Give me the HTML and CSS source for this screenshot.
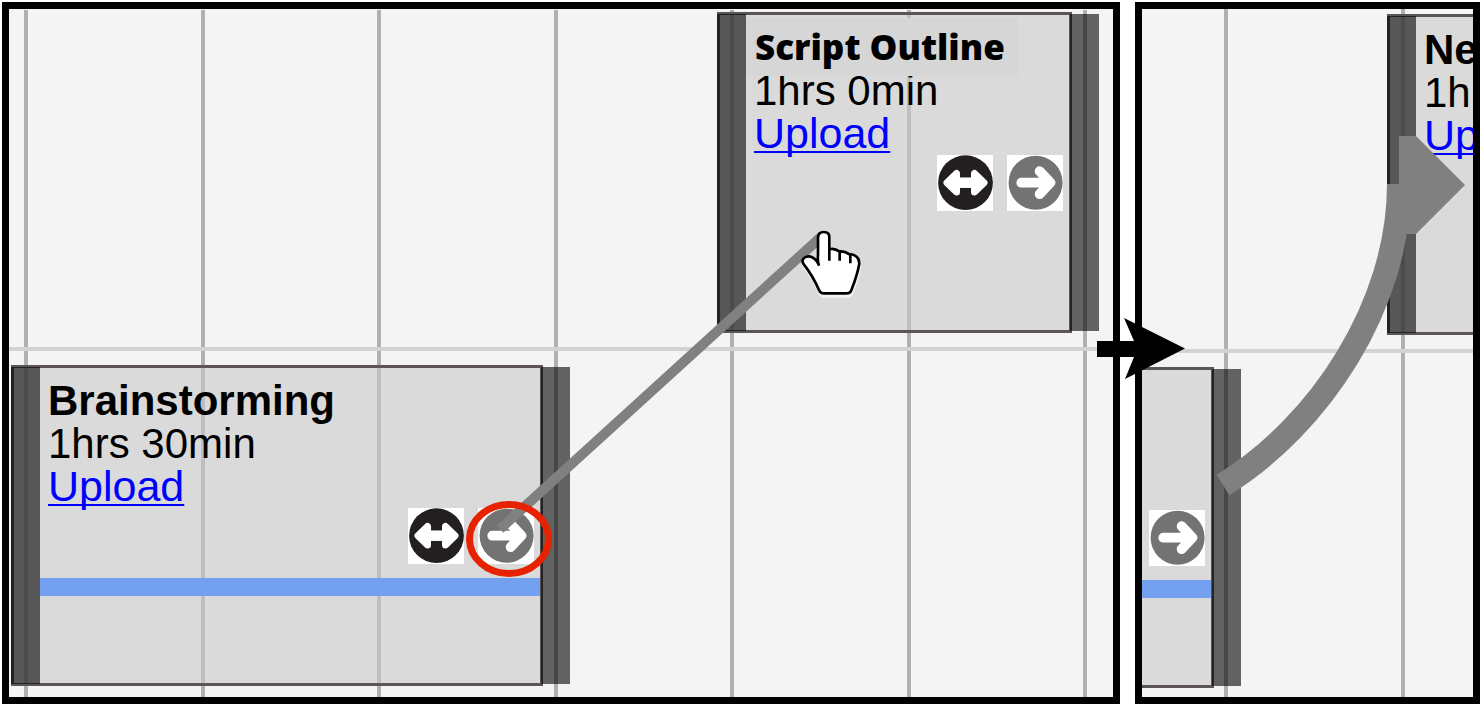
FILE: index.html
```
<!DOCTYPE html>
<html lang="en">
<head>
<meta charset="utf-8">
<title>Task handoff timeline</title>
<link rel="stylesheet" href="styles.css">
</head>
<body>
<svg class="symbols" aria-hidden="true">
  <symbol id="both" viewBox="0 0 56 56">
    <circle cx="28.5" cy="27.7" r="27.4" fill="#231f20"/>
    <g fill="#fff" stroke="#fff" stroke-width="7" stroke-linejoin="round">
      <path d="M10 27.7 19.5 18.5V36.9Z M47 27.7 37.5 18.500V36.9Z"/>
      <path d="M19 27.7H38" stroke-width="10.5"/>
    </g>
  </symbol>
  <symbol id="next" viewBox="0 0 56 56">
    <circle cx="28.6" cy="27.7" r="27" fill="#737373"/>
    <g fill="none" stroke="#fff" stroke-width="9.8" stroke-linecap="round" stroke-linejoin="round">
      <path d="M14.3 27.7H42M32.6 16.2 43.4 27.7 32.6 39.2"/>
    </g>
  </symbol>
</svg>
<main class="steps">
  <section class="step">
    <div class="canvas">
      <svg class="layer" aria-hidden="true">
        <path class="hours" d="M17 1V700M194 1V700M370 1V700M547 1V700M723 1V700M900 1V700M1076 1V700"/>
        <path class="row-line" d="M0 340H2000"/>
      </svg>
      <article class="card brainstorm">
        <div class="text">
          <h2>Brainstorming</h2>
          <p>1hrs 30min</p>
          <a href="#upload">Upload</a>
        </div>
        <div class="tools">
          <button type="button" aria-label="Collaborate"><svg><use href="#both"/></svg></button>
          <button type="button" aria-label="Hand off"><svg><use href="#next"/></svg></button>
        </div>
        <div class="bar"></div>
        <span class="handle start"></span>
        <span class="handle end"></span>
      </article>
      <article class="card script">
        <div class="text">
          <h2 class="renamed">Script Outline</h2>
          <p>1hrs 0min</p>
          <a href="#upload">Upload</a>
        </div>
        <div class="tools">
          <button type="button" aria-label="Collaborate"><svg><use href="#both"/></svg></button>
          <button type="button" aria-label="Hand off"><svg><use href="#next"/></svg></button>
        </div>
        <span class="handle start"></span>
        <span class="handle end"></span>
      </article>
      <svg class="layer" aria-hidden="true">
        <path d="M491 520 813 227" fill="none" stroke="#808080" stroke-width="10"/>
        <ellipse cx="500" cy="530" rx="39.5" ry="34.5" fill="none" stroke="#e62200" stroke-width="7"/>
        <svg x="791" y="219" width="64" height="74" viewBox="300 85 192 222">
          <path d="M358 198V112Q358 97 371 97Q388 97 388 112V149Q402 144 416 155Q432 152 446 162Q462 161 468 172Q478 176 478 192Q472 225 454 272Q451 281 440 281H370Q362 281 358 273Q338 228 312 195Q303 184 312 175Q330 162 350 184Z" transform="translate(2 9)" fill="#fff" stroke="#f2f2f2" stroke-width="8"/>
          <path d="M358 198V112Q358 97 371 97Q388 97 388 112V149Q402 144 416 155Q432 152 446 162Q462 161 468 172Q478 176 478 192Q472 225 454 272Q451 281 440 281H370Q362 281 358 273Q338 228 312 195Q303 184 312 175Q330 162 350 184Z" fill="#fff"/>
          <path d="M357 198Q352 186 354 165V112Q356 97 371 97Q388 97 388 112V183M388 149Q402 144 419 156V183M419 155Q436 154 451 166V191M451 163Q478 168 478 192Q472 225 454 272Q451 281 440 281H370Q362 281 358 273Q338 228 312 195Q303 184 312 175Q330 162 350 184L357 196" fill="none" stroke="#000" stroke-width="8" stroke-linejoin="round"/>
        </svg>
      </svg>
    </div>
  </section>
  <section class="step">
    <div class="canvas">
      <svg class="layer" aria-hidden="true">
        <path class="hours" d="M84 0V700M261 0V700"/>
        <path class="row-line" d="M0 342H2000"/>
      </svg>
      <article class="card source">
        <div class="tools">
          <button type="button" aria-label="Hand off"><svg><use href="#next"/></svg></button>
        </div>
        <div class="bar"></div>
        <span class="handle end"></span>
      </article>
      <article class="card target">
        <div class="text">
          <h2>New</h2>
          <p>1hrs</p>
          <a href="#upload">Upload</a>
        </div>
        <span class="handle start"></span>
      </article>
      <svg class="layer" aria-hidden="true">
        <path d="M81 476C178 416 257 296 257 175" fill="none" stroke="#808080" stroke-width="24"/>
        <path d="M257 127H274L323 176 274 225H257Z" fill="#808080"/>
      </svg>
    </div>
    <svg class="advance" viewBox="0 0 88 62" aria-hidden="true">
      <path d="M0 23H37L27 0 88 30.500 28 61 37 39H0Z"/>
    </svg>
  </section>
</main>
</body>
</html>
```
FILE: styles.css
```
* {
  box-sizing: border-box;
}

body {
  margin: 0;
  background: #fff;
  color: #000;
  font-family: "Liberation Sans", Arial, sans-serif;
  font-size: 43px;
  line-height: 43px;
}

h2,
p {
  margin: 0;
  font-size: 42px;
  line-height: 43px;
}

a {
  color: #00f;
  text-decoration-thickness: 2px;
  text-underline-offset: 3px;
  text-decoration-skip-ink: none;
}

.symbols {
  position: absolute;
  width: 0;
  height: 0;
}

.steps {
  display: grid;
  grid-template-columns: 1118fr 345fr;
  gap: 15px;
  min-height: 100vh;
  padding: 2px 4px 0 2px;
}

.step {
  display: grid;
  position: relative;
  min-width: 0;
}

.canvas {
  position: relative;
  overflow: hidden;
  border: 7px solid #000;
  background: #f4f4f4;
}

.layer {
  position: absolute;
  inset: 0;
  width: 100%;
  height: 100%;
  pointer-events: none;
}

.hours {
  stroke: #b0b0b0;
  stroke-width: 4;
}

.row-line {
  stroke: #d2d2d2;
  stroke-width: 4;
}

.card {
  position: absolute;
  height: 321px;
  border: 3px solid #5b5655;
  background: rgba(200, 200, 200, 0.6);
  background-clip: padding-box;
  white-space: nowrap;
}

.brainstorm {
  left: 2px;
  top: 356px;
  width: 532px;
}

.script {
  left: 708px;
  top: 3px;
  width: 355px;
}

.source {
  left: -3px;
  top: 358px;
  width: 75px;
  padding-top: 140px;
}

.target {
  left: 245px;
  top: 5px;
  width: 355px;
}

.text {
  height: 140px;
  padding: 11px 0 0 34px;
}

.renamed {
  position: relative;
  width: 272px;
  margin: -8px 0 -7px -8px;
  padding-left: 9px;
  background: #d6d6d6;
  font-family: "Open Sans", "Gill Sans", sans-serif;
  font-size: 35px;
  font-weight: 800;
  line-height: 58px;
}

.tools {
  display: flex;
  justify-content: flex-end;
  gap: 14px;
  padding-right: 6px;
}

.tools button {
  width: 56px;
  height: 56px;
  padding: 0;
  border: 0;
  background: #fff;
}

.tools svg {
  display: block;
  width: 56px;
  height: 56px;
}

.bar {
  height: 18px;
  margin: 14px 0 0 26px;
  background: #73a0ef;
}

.source .bar {
  margin-left: 0;
}

.handle {
  position: absolute;
  top: -1px;
  bottom: -1px;
  width: 29px;
  background: rgba(0, 0, 0, 0.6);
}

.start {
  left: -3px;
}

.end {
  right: -30px;
}

.advance {
  position: absolute;
  left: -38px;
  top: 316px;
  width: 88px;
  height: 62px;
}
```
